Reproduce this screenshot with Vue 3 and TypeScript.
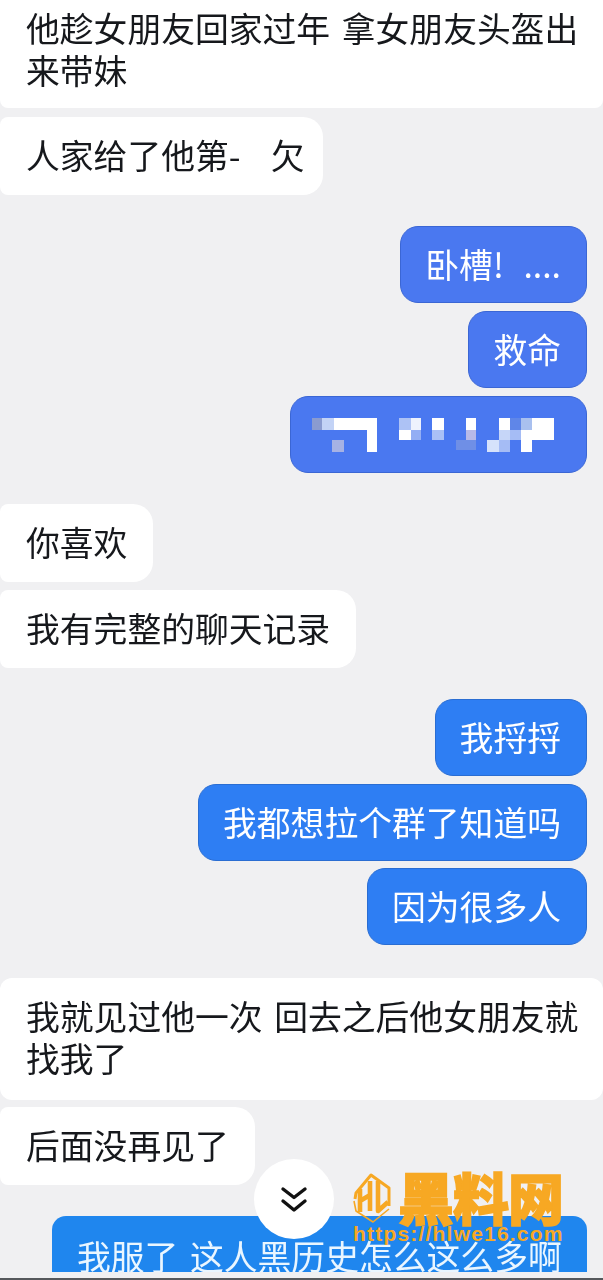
<script setup lang="ts">
interface Msg { text: string[]; side: 'in' | 'out'; tone?: string; gap: number; wide?: boolean; cls?: string }
const msgs: Msg[] = [
  { text: ['他趁女朋友回家过年 拿女朋友头盔出', '来带妹'], side: 'in', gap: 0, wide: true, cls: 'first' },
  { text: ['人家给了他第-    欠'], side: 'in', gap: 9, cls: 'tight' },
  { text: ['卧槽! ....'], side: 'out', tone: 'a', gap: 31, cls: 'exclaim' },
  { text: ['救命'], side: 'out', tone: 'a', gap: 8 },
]
const msgs2: Msg[] = [
  { text: ['你喜欢'], side: 'in', gap: 31 },
  { text: ['我有完整的聊天记录'], side: 'in', gap: 8 },
  { text: ['我捋捋'], side: 'out', tone: 'b', gap: 31 },
  { text: ['我都想拉个群了知道吗'], side: 'out', tone: 'b', gap: 8 },
  { text: ['因为很多人'], side: 'out', tone: 'b', gap: 7 },
  { text: ['我就见过他一次 回去之后他女朋友就', '找我了'], side: 'in', gap: 33, wide: true, cls: 'second' },
  { text: ['后面没再见了'], side: 'in', gap: 7 },
]
const pixels: [number, number, number, number, string][] = [
  [0, 0, 10, 12, '#8a9bd0'], [10, 0, 12, 12, '#c3d3f6'], [22, 0, 43, 12, '#ffffff'],
  [55, 12, 10, 22, '#ffffff'], [20, 22, 12, 12, '#a6b2e4'],
  [87, 0, 12, 12, '#adc2f5'], [99, 0, 10, 12, '#eef2fd'], [87, 12, 12, 10, '#ffffff'], [99, 12, 10, 10, '#93aef4'],
  [120, 0, 12, 12, '#ffffff'], [120, 12, 12, 10, '#a9c0f6'],
  [154, 0, 10, 12, '#ffffff'], [154, 12, 10, 10, '#b6b9e8'], [144, 22, 20, 10, '#6f8fe6'],
  [187, 0, 11, 12, '#ffffff'], [198, 0, 11, 12, '#5f86e8'], [209, 0, 11, 12, '#a9c0ef'], [220, 0, 22, 12, '#ffffff'],
  [187, 12, 11, 10, '#c6d6f8'], [198, 12, 11, 10, '#a5bcf5'], [209, 12, 11, 10, '#ffffff'], [220, 12, 22, 10, '#ffffff'],
  [175, 22, 12, 12, '#d6e2fb'], [187, 22, 11, 12, '#a5bcf5'], [209, 22, 11, 12, '#ffffff'],
]
</script>

<template>
  <div class="page">
    <div class="list">
      <div
        v-for="(m, i) in msgs"
        :key="i"
        class="bubble"
        :class="[m.side, m.tone, m.cls, { wide: m.wide }]"
        :style="{ marginTop: m.gap + 'px' }"
      >
        <div v-for="(line, j) in m.text" :key="j">{{ line }}</div>
      </div>
      <div class="bubble out a mosaic">
        <svg width="265" height="34" viewBox="0 0 265 34" aria-label="打码的文字">
          <rect v-for="(p, k) in pixels" :key="k" :x="p[0]" :y="p[1]" :width="p[2]" :height="p[3]" :fill="p[4]" />
        </svg>
      </div>
      <div
        v-for="(m, i) in msgs2"
        :key="'b' + i"
        class="bubble"
        :class="[m.side, m.tone, m.cls, { wide: m.wide }]"
        :style="{ marginTop: m.gap + 'px' }"
      >
        <div v-for="(line, j) in m.text" :key="j">{{ line }}</div>
      </div>
      <div class="bubble out c last">我服了 这人黑历史怎么这么多啊</div>
    </div>

    <div class="down">
      <svg width="30" height="30" viewBox="0 0 30 30" fill="none" stroke="#111" stroke-width="3.4" stroke-linecap="round" stroke-linejoin="round">
        <path d="M4 5 15 13.5 26 5" />
        <path d="M4 17 15 26 26 17" />
      </svg>
    </div>

    <div class="mark">
      <div class="brand">
        <svg class="logo" width="42" height="50" viewBox="0 0 42 50" fill="none" stroke="#f7a823" stroke-linejoin="round">
          <path d="M4 26 5 20 20 2 38 15V33" stroke-width="3" />
          <path d="M3 28 5 38 22 49 38 36" stroke-width="1.6" />
          <path d="M9 39V16M19 8V38M9 28 19 22" stroke-width="4.6" />
          <path d="M27 8V38L37 29" stroke-width="4.6" />
        </svg>
        <span class="name">黑料网</span>
      </div>
      <div class="url">https://hlwe16.com</div>
    </div>

    <div class="edge"></div>
  </div>
</template>

<style scoped>
.page {
  position: relative;
  width: 603px;
  height: 1280px;
  overflow: hidden;
  background: #f0f0f2;
  font-family: "Noto Sans CJK SC", "Noto Sans", sans-serif;
}
.list {
  display: flex;
  flex-direction: column;
  height: 1272px;
  overflow: hidden;
  filter: blur(0.4px);
}
.bubble {
  flex: none;
  box-sizing: border-box;
  padding: 17px 26px 19px;
  font-size: 33.8px;
  line-height: 42px;
  white-space: pre;
  border-radius: 18px;
}
.in {
  align-self: flex-start;
  background: #fff;
  color: #16181c;
  border-radius: 8px 20px 20px 8px;
}
.tight {
  padding-right: 18px;
}
.wide {
  align-self: stretch;
  word-spacing: 4px;
  border-radius: 0 0 8px 8px;
}
.first {
  padding-top: 7px;
  padding-bottom: 17px;
}
.second {
  border-radius: 12px;
  padding-bottom: 21px;
}
.out {
  align-self: flex-end;
  margin-right: 16px;
  color: #fff;
}
.a {
  background: #4a78f0;
  border: 1px solid #3b66d4;
  padding: 16px 25px 17px 24px;
}
.exclaim {
  word-spacing: 12px;
}
.b {
  background: #2e7ef3;
  border: 1px solid #2a6dd2;
  padding: 16px 25px 17px 24px;
}
.c {
  background: #1f86ee;
  color: #eaf6ff;
}
.mosaic {
  width: 297px;
  height: 77px;
  margin-top: 8px;
  padding: 21px 0 0 21px;
}
.mosaic svg {
  display: block;
}
.last {
  width: 535px;
  margin-top: 31px;
  padding: 19px 0 0 25px;
  height: 70px;
  word-spacing: 4px;
  border-radius: 14px 14px 0 0;
}
.down {
  position: absolute;
  left: 254px;
  top: 1159px;
  width: 80px;
  height: 80px;
  border-radius: 50%;
  background: #fff;
  display: flex;
  align-items: center;
  justify-content: center;
}
.mark {
  position: absolute;
  left: 351px;
  top: 1173px;
  width: 220px;
  display: flex;
  flex-direction: column;
  color: #f7a823;
}
.brand {
  display: flex;
  align-items: center;
  gap: 5px;
  height: 50px;
}
.name {
  font-weight: 900;
  font-size: 56px;
  line-height: 50px;
  letter-spacing: -1px;
  margin-top: -5px;
  -webkit-text-stroke: 1.5px #f7a823;
}
.url {
  font-family: "Liberation Sans", Arial, sans-serif;
  font-weight: 700;
  font-size: 21px;
  line-height: 20px;
  letter-spacing: 1.2px;
  margin: 1px 0 0 2px;
  white-space: nowrap;
}
.edge {
  position: absolute;
  left: 0;
  right: 0;
  bottom: 0;
  height: 2px;
  background: #55585c;
}
</style>
